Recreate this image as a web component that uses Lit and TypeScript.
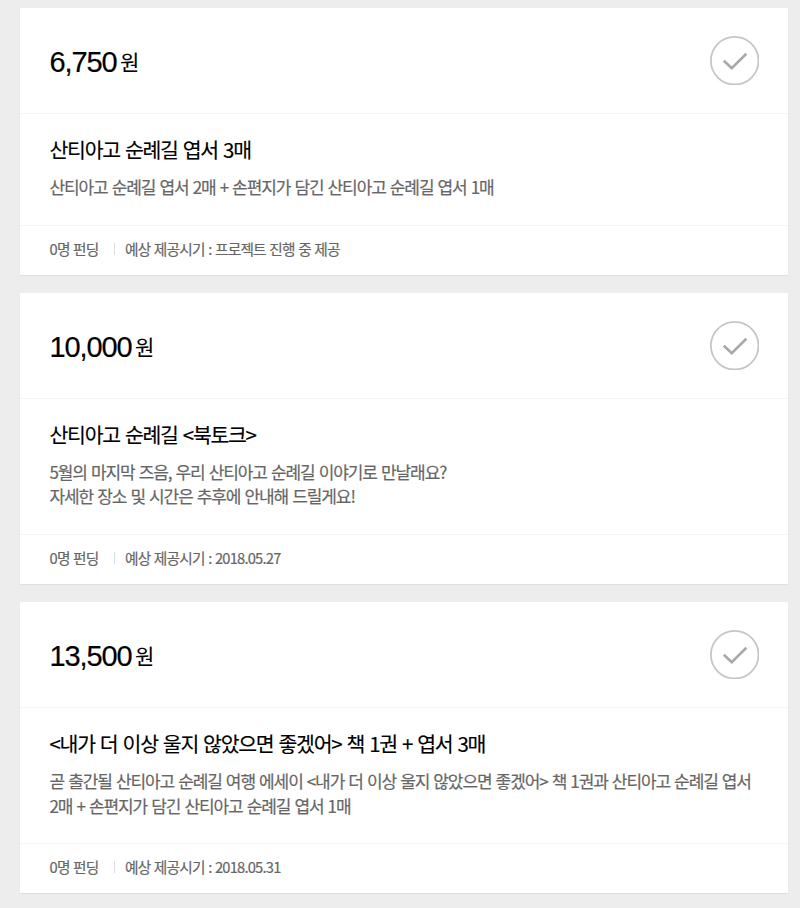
import {LitElement, html, css, svg} from 'lit'
import {customElement, property} from 'lit/decorators.js'

interface Reward {
  price: string
  name: string
  description: string[]
  funded: number
  delivery: string
}

const rewards: Reward[] = [
  {
    price: '6,750',
    name: '산티아고 순례길 엽서 3매',
    description: ['산티아고 순례길 엽서 2매 + 손편지가 담긴 산티아고 순례길 엽서 1매'],
    funded: 0,
    delivery: '프로젝트 진행 중 제공',
  },
  {
    price: '10,000',
    name: '산티아고 순례길 <북토크>',
    description: [
      '5월의 마지막 즈음, 우리 산티아고 순례길 이야기로 만날래요?',
      '자세한 장소 및 시간은 추후에 안내해 드릴게요!',
    ],
    funded: 0,
    delivery: '2018.05.27',
  },
  {
    price: '13,500',
    name: '<내가 더 이상 울지 않았으면 좋겠어> 책 1권 + 엽서 3매',
    description: [
      '곧 출간될 산티아고 순례길 여행 에세이 <내가 더 이상 울지 않았으면 좋겠어> 책 1권과 산티아고 순례길 엽서',
      '2매 + 손편지가 담긴 산티아고 순례길 엽서 1매',
    ],
    funded: 0,
    delivery: '2018.05.31',
  },
]

const checkIcon = svg`
  <svg class="check" viewBox="0 0 50 50" fill="none" aria-hidden="true">
    <circle cx="25" cy="25" r="24.1" stroke="#c6c6c6" stroke-width="1.8" />
    <path d="M14 25 L22 32.6 L36.8 18" stroke="#a8a8a8" stroke-width="2.6" />
  </svg>
`

@customElement('reward-card')
export class RewardCard extends LitElement {

  @property({attribute: false}) reward: Reward = rewards[0]

  static styles = css`
    :host {
      display: block;
      background: #fff;
      box-shadow: 0 1px 1px rgba(0,0,0, .05);
      white-space: nowrap;
    }
    .head {
      display: flex;
      align-items: center;
      justify-content: space-between;
      box-sizing: border-box;
      height: 105px;
      padding: 0 29px 0 29.5px;
    }
    .price {
      display: flex;
      align-items: flex-start;
      gap: 3.5px;
      padding-top: 3px;
      color: #000;
    }
    .amount {
      font: 29px/34px 'Liberation Sans', sans-serif;
      letter-spacing: -1.1px;
      -webkit-text-stroke: .2px;
    }
    .unit {
      font-size: 21px;
      line-height: 32px;
      -webkit-text-stroke: .1px;
    }
    .check {
      width: 49.4px;
      height: 49.4px;
    }
    .body {
      padding: 21px 0 25px 29.5px;
      border-top: 1px solid #f5f5f5;
      border-bottom: 1px solid #f5f5f5;
    }
    .name {
      margin: 0;
      color: #000;
      font-size: 20.5px;
      font-weight: 400;
      line-height: 28px;
      letter-spacing: -1.28px;
      word-spacing: 1.8px;
      -webkit-text-stroke: .15px;
    }
    .description {
      margin: 12px 0 0;
      color: #666;
      font-size: 17px;
      line-height: 24.5px;
      letter-spacing: -1.1px;
      word-spacing: 1.4px;
      -webkit-text-stroke: .2px;
    }
    .line {
      display: block;
    }
    .foot {
      display: flex;
      align-items: center;
      box-sizing: border-box;
      height: 49px;
      padding: 0 0 4px 29.5px;
      color: #666;
      font-size: 14.7px;
      letter-spacing: -.78px;
      word-spacing: .9px;
      -webkit-text-stroke: .2px;
    }
    .divider {
      width: 1px;
      height: 12px;
      margin: 1px 10px 0 15.5px;
      background: #ddd;
    }
  `

  render() {
    const {price, name, description, funded, delivery} = this.reward
    return html`
      <div class="head">
        <div class="price">
          <span class="amount">${price}</span>
          <span class="unit">원</span>
        </div>
        ${checkIcon}
      </div>
      <div class="body">
        <h2 class="name">${name}</h2>
        <p class="description">
          ${description.map(line => html`<span class="line">${line}</span>`)}
        </p>
      </div>
      <div class="foot">
        <span>${funded}명 펀딩</span>
        <span class="divider"></span>
        <span>예상 제공시기 : ${delivery}</span>
      </div>
    `
  }
}

@customElement('app-root')
export class AppRoot extends LitElement {

  static styles = css`
    :host {
      display: block;
      box-sizing: border-box;
      min-height: 908px;
      padding: 8px 12px 0 20px;
      background: #ededed;
      font-family: 'Noto Sans CJK KR', sans-serif;
    }
    .list {
      display: flex;
      flex-direction: column;
      gap: 18.4px;
    }
  `

  render() {
    return html`
      <div class="list">
        ${rewards.map(reward => html`<reward-card .reward=${reward}></reward-card>`)}
      </div>
    `
  }
}

declare global {
  interface HTMLElementTagNameMap {
    'app-root': AppRoot
    'reward-card': RewardCard
  }
}
